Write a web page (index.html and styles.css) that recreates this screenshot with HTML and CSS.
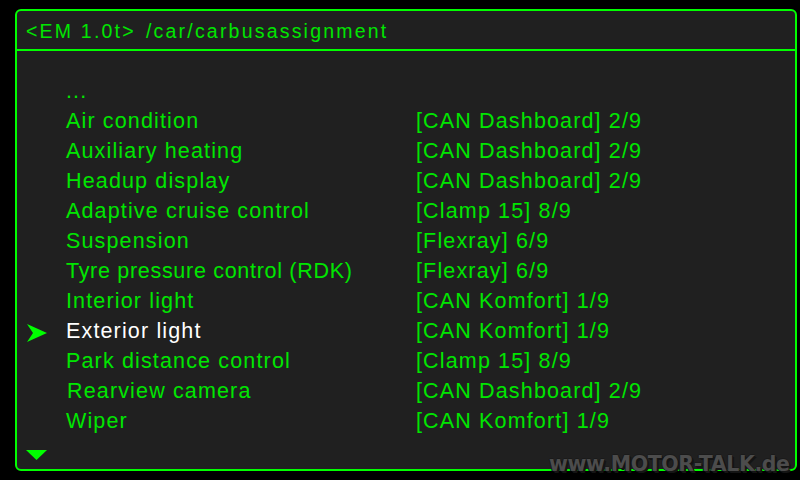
FILE: index.html
```html
<!DOCTYPE html>
<html>
<head>
<meta charset="utf-8">
<link rel="stylesheet" href="styles.css">
</head>
<body>
<div class="screen">
  <div class="panel">
    <div class="header"><span class="version">&lt;EM 1.0t&gt;</span><span class="path">/car/carbusassignment</span></div>
    <div class="list">
      <div class="row"><span class="mark"></span><span class="name">...</span><span class="value"></span></div>
      <div class="row"><span class="mark"></span><span class="name">Air condition</span><span class="value">[CAN Dashboard] 2/9</span></div>
      <div class="row"><span class="mark"></span><span class="name">Auxiliary heating</span><span class="value">[CAN Dashboard] 2/9</span></div>
      <div class="row"><span class="mark"></span><span class="name">Headup display</span><span class="value">[CAN Dashboard] 2/9</span></div>
      <div class="row"><span class="mark"></span><span class="name">Adaptive cruise control</span><span class="value">[Clamp 15] 8/9</span></div>
      <div class="row"><span class="mark"></span><span class="name">Suspension</span><span class="value">[Flexray] 6/9</span></div>
      <div class="row"><span class="mark"></span><span class="name tight">Tyre pressure control (RDK)</span><span class="value">[Flexray] 6/9</span></div>
      <div class="row"><span class="mark"></span><span class="name">Interior light</span><span class="value">[CAN Komfort] 1/9</span></div>
      <div class="row selected"><span class="mark"><svg width="20" height="18" viewBox="0 0 20 18"><polygon points="0,0 20,9 0,18 6,9" fill="#00ff00"/></svg></span><span class="name">Exterior light</span><span class="value">[CAN Komfort] 1/9</span></div>
      <div class="row"><span class="mark"></span><span class="name">Park distance control</span><span class="value">[Clamp 15] 8/9</span></div>
      <div class="row"><span class="mark"></span><span class="name shift">Rearview camera</span><span class="value">[CAN Dashboard] 2/9</span></div>
      <div class="row"><span class="mark"></span><span class="name">Wiper</span><span class="value">[CAN Komfort] 1/9</span></div>
    </div>
    <div class="footer"><svg width="21" height="10" viewBox="0 0 21 10"><polygon points="0,0 21,0 10.5,10" fill="#00ff00"/></svg></div>
  </div>
  <div class="watermark">www.MOTOR-TALK.de</div>
</div>
</body>
</html>
```
FILE: styles.css
```css
html, body {
  margin: 0;
  padding: 0;
  background: #000;
}
.screen {
  position: relative;
  width: 800px;
  height: 480px;
  background: #000;
  overflow: hidden;
  font-family: "Liberation Sans", Arial, sans-serif;
}
.panel {
  box-sizing: border-box;
  margin: 9px 0 0 15px;
  width: 782px;
  height: 462px;
  border: 2px solid #00ff00;
  border-radius: 6px;
  background: #202020;
  display: flex;
  flex-direction: column;
}
.header {
  box-sizing: border-box;
  height: 40px;
  padding: 2px 0 0 9px;
  line-height: 36px;
  border-bottom: 2px solid #00ff00;
  color: #00e600;
  font-size: 19.5px;
  letter-spacing: 2.2px;
  white-space: pre;
  display: flex;
}
.version {
  width: 120px;
}
.list {
  padding: 25px 0 0 10px;
  display: flex;
  flex-direction: column;
}
.row {
  display: grid;
  grid-template-columns: 39px 350px 1fr;
  height: 30px;
  line-height: 30px;
  font-size: 21.5px;
  letter-spacing: 1.15px;
  color: #00e600;
  white-space: nowrap;
}
.mark {
  display: flex;
  align-items: center;
  padding-top: 4px;
}
.mark svg {
  display: block;
}
.selected .name {
  color: #ffffff;
}
.shift {
  padding-left: 1px;
}
.tight {
  letter-spacing: 0.7px;
}
.footer {
  display: flex;
  padding: 14px 0 0 9px;
}
.footer svg {
  display: block;
}
.watermark {
  position: absolute;
  left: 549px;
  top: 454px;
  font-family: "DejaVu Sans", sans-serif;
  font-size: 20.5px;
  line-height: 20px;
  font-weight: bold;
  letter-spacing: -0.4px;
  color: #4c4c4c;
  text-shadow: 1px 1px 0 #141414, 2px 2px 0 #141414, -1px 0 0 #1a1a1a, 0 -1px 0 #1a1a1a;
  white-space: nowrap;
}
```
